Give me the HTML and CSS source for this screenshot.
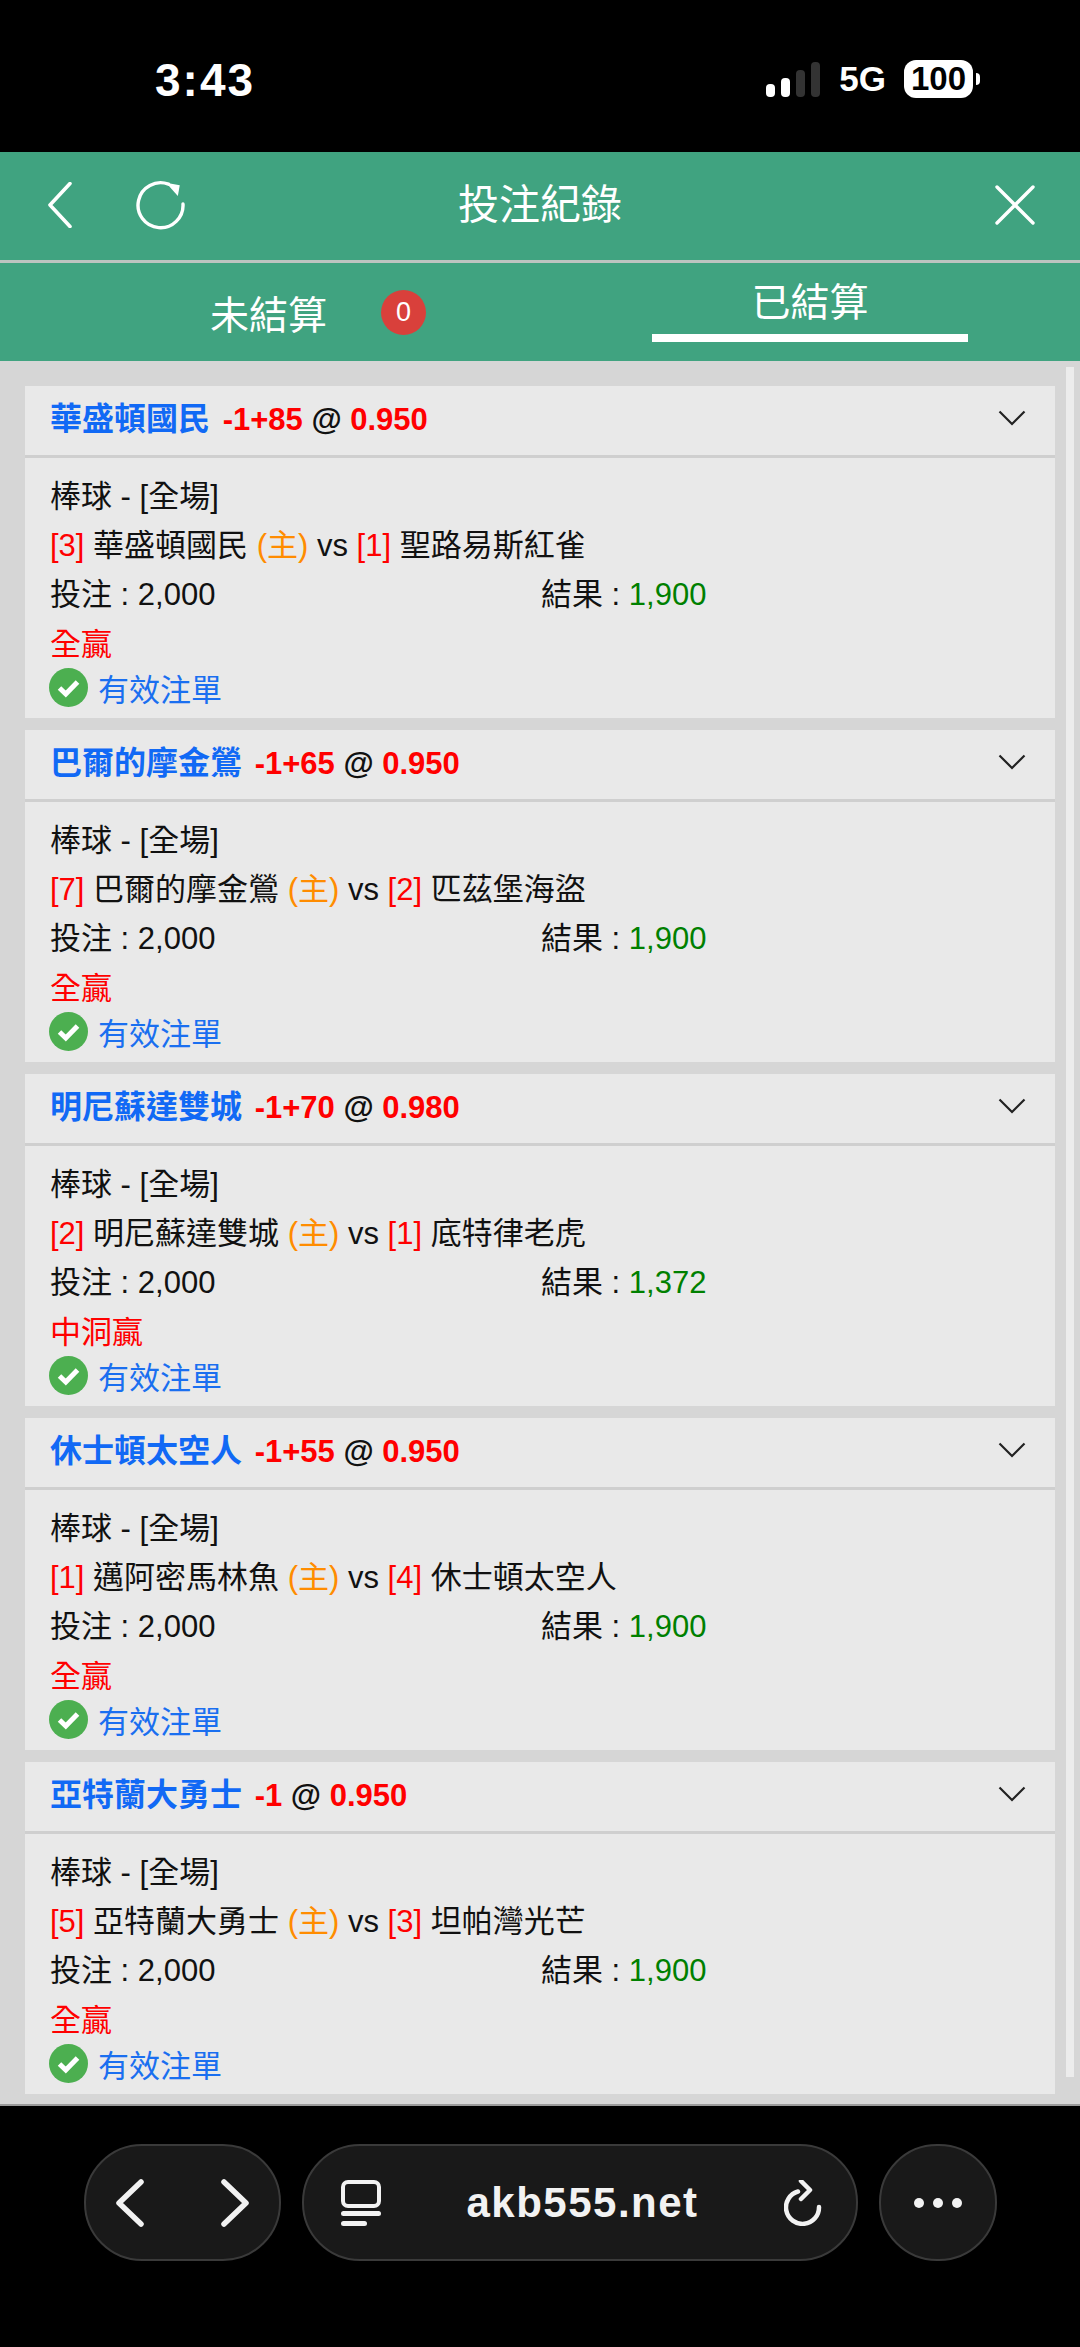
FILE: index.html
```html
<!DOCTYPE html>
<html lang="zh-Hant">
<head>
    <meta charset="utf-8">
    <title>投注紀錄</title>
    <link rel="stylesheet" href="styles.css">
</head>
<body>
    <div class="status">
        <span class="time">3:43</span>
        <div class="status-right">
            <div class="signal">
                <i class="bar b1"></i><i class="bar b2"></i><i class="bar b3 off"></i><i class="bar b4 off"></i>
            </div>
            <span class="net">5G</span>
            <span class="battery">100</span>
            <i class="nub"></i>
        </div>
    </div>

    <div class="header">
        <svg class="ic-back" width="24" height="46" viewBox="0 0 24 46"><path d="M22 1.500 L2 23 L22 44.500" fill="none" stroke="#fff" stroke-width="3.600" stroke-linecap="round" stroke-linejoin="round"/></svg>
        <svg class="ic-reload" width="50" height="50" viewBox="0 0 50 50"><path d="M32.500 4.200 A22.500 22.500 0 1 0 47 24" fill="none" stroke="#fff" stroke-width="3.400" stroke-linecap="round"/><path d="M29 4 L43 4 L43 15 Z" fill="#fff" transform="rotate(10 36 9)"/></svg>
        <span class="title">投注紀錄</span>
        <svg class="ic-close" width="40" height="40" viewBox="0 0 40 40"><path d="M2 2 L38 38 M38 2 L2 38" fill="none" stroke="#fff" stroke-width="3.400" stroke-linecap="round"/></svg>
    </div>

    <div class="tabs">
        <div class="tab tab-open">
            <span>未結算</span>
            <span class="badge">0</span>
        </div>
        <div class="tab tab-done">
            <span>已結算</span>
        </div>
    </div>

    <div class="content">
        <div class="list">
            <div class="card">
                <div class="card-head">
                    <div><span class="team">華盛頓國民</span> <span class="red">-1+85</span> @ <span class="red">0.950</span></div>
                    <svg class="ic-down" width="28" height="16" viewBox="0 0 28 16"><path d="M1.500 1.500 L14 14 L26.500 1.500" fill="none" stroke="#222" stroke-width="2.200"/></svg>
                </div>
                <div class="card-body">
                    <div class="row">棒球 - [全場]</div>
                    <div class="row"><span class="red">[3]</span> 華盛頓國民 <span class="orange">(主)</span> vs <span class="red">[1]</span> 聖路易斯紅雀</div>
                    <div class="row split"><span>投注 : 2,000</span><span>結果 : <span class="green">1,900</span></span></div>
                    <div class="row result red">全贏</div>
                    <div class="valid">
                        <svg width="39" height="39" viewBox="0 0 39 39"><circle cx="19.500" cy="19.500" r="19.500" fill="#4caf50"/><path d="M10.500 20 L16.800 26 L28.500 14" fill="none" stroke="#fff" stroke-width="5"/></svg>
                        <span>有效注單</span>
                    </div>
                </div>
            </div>

            <div class="card">
                <div class="card-head">
                    <div><span class="team">巴爾的摩金鶯</span> <span class="red">-1+65</span> @ <span class="red">0.950</span></div>
                    <svg class="ic-down" width="28" height="16" viewBox="0 0 28 16"><path d="M1.500 1.500 L14 14 L26.500 1.500" fill="none" stroke="#222" stroke-width="2.200"/></svg>
                </div>
                <div class="card-body">
                    <div class="row">棒球 - [全場]</div>
                    <div class="row"><span class="red">[7]</span> 巴爾的摩金鶯 <span class="orange">(主)</span> vs <span class="red">[2]</span> 匹茲堡海盜</div>
                    <div class="row split"><span>投注 : 2,000</span><span>結果 : <span class="green">1,900</span></span></div>
                    <div class="row result red">全贏</div>
                    <div class="valid">
                        <svg width="39" height="39" viewBox="0 0 39 39"><circle cx="19.500" cy="19.500" r="19.500" fill="#4caf50"/><path d="M10.500 20 L16.800 26 L28.500 14" fill="none" stroke="#fff" stroke-width="5"/></svg>
                        <span>有效注單</span>
                    </div>
                </div>
            </div>

            <div class="card">
                <div class="card-head">
                    <div><span class="team">明尼蘇達雙城</span> <span class="red">-1+70</span> @ <span class="red">0.980</span></div>
                    <svg class="ic-down" width="28" height="16" viewBox="0 0 28 16"><path d="M1.500 1.500 L14 14 L26.500 1.500" fill="none" stroke="#222" stroke-width="2.200"/></svg>
                </div>
                <div class="card-body">
                    <div class="row">棒球 - [全場]</div>
                    <div class="row"><span class="red">[2]</span> 明尼蘇達雙城 <span class="orange">(主)</span> vs <span class="red">[1]</span> 底特律老虎</div>
                    <div class="row split"><span>投注 : 2,000</span><span>結果 : <span class="green">1,372</span></span></div>
                    <div class="row result red">中洞贏</div>
                    <div class="valid">
                        <svg width="39" height="39" viewBox="0 0 39 39"><circle cx="19.500" cy="19.500" r="19.500" fill="#4caf50"/><path d="M10.500 20 L16.800 26 L28.500 14" fill="none" stroke="#fff" stroke-width="5"/></svg>
                        <span>有效注單</span>
                    </div>
                </div>
            </div>

            <div class="card">
                <div class="card-head">
                    <div><span class="team">休士頓太空人</span> <span class="red">-1+55</span> @ <span class="red">0.950</span></div>
                    <svg class="ic-down" width="28" height="16" viewBox="0 0 28 16"><path d="M1.500 1.500 L14 14 L26.500 1.500" fill="none" stroke="#222" stroke-width="2.200"/></svg>
                </div>
                <div class="card-body">
                    <div class="row">棒球 - [全場]</div>
                    <div class="row"><span class="red">[1]</span> 邁阿密馬林魚 <span class="orange">(主)</span> vs <span class="red">[4]</span> 休士頓太空人</div>
                    <div class="row split"><span>投注 : 2,000</span><span>結果 : <span class="green">1,900</span></span></div>
                    <div class="row result red">全贏</div>
                    <div class="valid">
                        <svg width="39" height="39" viewBox="0 0 39 39"><circle cx="19.500" cy="19.500" r="19.500" fill="#4caf50"/><path d="M10.500 20 L16.800 26 L28.500 14" fill="none" stroke="#fff" stroke-width="5"/></svg>
                        <span>有效注單</span>
                    </div>
                </div>
            </div>

            <div class="card">
                <div class="card-head">
                    <div><span class="team">亞特蘭大勇士</span> <span class="red">-1</span> @ <span class="red">0.950</span></div>
                    <svg class="ic-down" width="28" height="16" viewBox="0 0 28 16"><path d="M1.500 1.500 L14 14 L26.500 1.500" fill="none" stroke="#222" stroke-width="2.200"/></svg>
                </div>
                <div class="card-body">
                    <div class="row">棒球 - [全場]</div>
                    <div class="row"><span class="red">[5]</span> 亞特蘭大勇士 <span class="orange">(主)</span> vs <span class="red">[3]</span> 坦帕灣光芒</div>
                    <div class="row split"><span>投注 : 2,000</span><span>結果 : <span class="green">1,900</span></span></div>
                    <div class="row result red">全贏</div>
                    <div class="valid">
                        <svg width="39" height="39" viewBox="0 0 39 39"><circle cx="19.500" cy="19.500" r="19.500" fill="#4caf50"/><path d="M10.500 20 L16.800 26 L28.500 14" fill="none" stroke="#fff" stroke-width="5"/></svg>
                        <span>有效注單</span>
                    </div>
                </div>
            </div>
        </div>
        <div class="scrollbar"></div>
    </div>

    <div class="toolbar">
        <div class="pill pill-nav">
            <svg width="30" height="48" viewBox="0 0 30 48"><path d="M26 3 L4 24 L26 45" fill="none" stroke="#f2f2f2" stroke-width="5.500" stroke-linecap="round" stroke-linejoin="round"/></svg>
            <svg width="30" height="48" viewBox="0 0 30 48"><path d="M4 3 L26 24 L4 45" fill="none" stroke="#f2f2f2" stroke-width="5.500" stroke-linecap="round" stroke-linejoin="round"/></svg>
        </div>
        <div class="pill pill-url">
            <svg width="40" height="46" viewBox="0 0 40 46"><rect x="2" y="2" width="36" height="24" rx="5" fill="none" stroke="#f2f2f2" stroke-width="4"/><rect x="0" y="31" width="40" height="5" rx="2.500" fill="#f2f2f2"/><rect x="0" y="41" width="26" height="5" rx="2.500" fill="#f2f2f2"/></svg>
            <span class="url">akb555.net</span>
            <svg width="38" height="46" viewBox="0 0 38 46"><path d="M14 11.500 A16.500 16.500 0 1 0 35 27" fill="none" stroke="#f2f2f2" stroke-width="4.500" stroke-linecap="round"/><path d="M17 1 L26 10 L17 19" fill="none" stroke="#f2f2f2" stroke-width="4.500" stroke-linecap="round" stroke-linejoin="round"/></svg>
        </div>
        <div class="pill pill-more">
            <i class="dot"></i><i class="dot"></i><i class="dot"></i>
        </div>
    </div>
</body>
</html>
```

FILE: styles.css
```css
* {
    box-sizing: border-box;
}
body {
    margin: 0;
    width: 1080px;
    height: 2347px;
    background-color: #000;
    font-family: "Liberation Sans", "Noto Sans CJK TC", sans-serif;
    font-size: 31px;
    color: #111;
    overflow: hidden;
}

/* status bar */
.status {
    height: 152px;
    display: flex;
    justify-content: space-between;
    padding: 56px 100px 0 155px;
    color: #fff;
}
.time {
    font-size: 46px;
    font-weight: bold;
    line-height: 48px;
    letter-spacing: 2px;
}
.status-right {
    display: flex;
    align-items: flex-start;
    padding-top: 4px;
}
.signal {
    display: flex;
    align-items: flex-end;
    gap: 6px;
    height: 35px;
    margin-top: 2px;
}
.bar {
    width: 9px;
    border-radius: 4px;
    background-color: #fff;
}
.bar.off {
    background-color: #333;
}
.b1 { height: 13px; }
.b2 { height: 19px; }
.b3 { height: 27px; }
.b4 { height: 35px; }
.net {
    font-size: 35px;
    font-weight: bold;
    line-height: 38px;
    margin-left: 19px;
}
.battery {
    width: 69px;
    height: 38px;
    margin-left: 18px;
    border-radius: 12px;
    background-color: #fff;
    color: #000;
    font-size: 33px;
    font-weight: bold;
    line-height: 38px;
    text-align: center;
}
.nub {
    width: 4px;
    height: 12px;
    margin: 13px 0 0 3px;
    border-radius: 0 4px 4px 0;
    background-color: #fff;
}

/* green header */
.header {
    height: 111px;
    display: flex;
    align-items: center;
    padding: 0 45px 3px 48px;
    background-color: #40a380;
    border-bottom: 3px solid #bcc4c0;
    color: #fff;
    position: relative;
}
.ic-reload {
    margin-left: 64px;
}
.title {
    position: absolute;
    left: 0;
    right: 0;
    text-align: center;
    font-size: 41px;
    line-height: 50px;
}
.ic-close {
    margin-left: auto;
}

.tabs {
    height: 98px;
    display: grid;
    grid-template-columns: 540px 540px;
    background-color: #40a380;
    color: #fff;
    font-size: 39px;
}
.tab-open {
    display: flex;
    align-items: center;
    gap: 54px;
    padding-left: 210px;
    padding-top: 0;
}
.badge {
    width: 45px;
    height: 45px;
    border-radius: 50%;
    background-color: #d9403b;
    font-size: 27px;
    line-height: 45px;
    text-align: center;
}
.tab-done {
    width: 316px;
    height: 79px;
    margin-left: 112px;
    padding-top: 16px;
    border-bottom: 8px solid #fff;
    text-align: center;
    line-height: 48px;
}

/* bet list */
.content {
    height: 1745px;
    display: flex;
    background-color: #d6d6d6;
    border-bottom: 2px solid #9a9a9a;
}
.list {
    width: 1055px;
    padding: 25px 0 0 25px;
    display: flex;
    flex-direction: column;
    gap: 12px;
}
.card {
    height: 332px;
    background-color: #e9e9e9;
}
.card-head {
    height: 72px;
    display: flex;
    justify-content: space-between;
    padding: 13px 29px 0 25px;
    border-bottom: 3px solid #cfcfcf;
    font-size: 31px;
    font-weight: bold;
    line-height: 40px;
}
.ic-down {
    margin-top: 11px;
}
.team {
    color: #1169f5;
    font-size: 32px;
    margin-right: 4px;
}
.red {
    color: #ff0000;
}
.orange {
    color: #ff8c00;
}
.green {
    color: #008000;
}
.card-body {
    padding: 14px 0 0 25px;
}
.row {
    height: 49px;
    line-height: 49px;
    white-space: nowrap;
}
.split {
    display: grid;
    grid-template-columns: 491px 1fr;
}
.result {
    height: 36px;
    line-height: 36px;
    margin-top: 8px;
}
.valid {
    display: flex;
    align-items: center;
    gap: 10px;
    margin: 2px 0 0 -1px;
    color: #1a6ff0;
}
.scrollbar {
    width: 8px;
    height: 1710px;
    margin: 6px 0 0 11px;
    background-color: #ececec;
}

/* browser toolbar */
.toolbar {
    display: flex;
    gap: 21px;
    padding: 38px 0 0 84px;
}
.pill {
    height: 117px;
    border-radius: 58px;
    border: 2px solid #3a3a3a;
    background-color: #191919;
    display: flex;
    align-items: center;
}
.pill-nav {
    width: 197px;
    justify-content: space-between;
    padding: 0 29px 0 29px;
}
.pill-url {
    width: 556px;
    justify-content: space-between;
    padding: 0 34px 0 37px;
}
.url {
    color: #f2f2f2;
    font-size: 42px;
    font-weight: bold;
    letter-spacing: 1.500px;
}
.pill-more {
    width: 118px;
    justify-content: center;
    gap: 9px;
}
.dot {
    width: 10px;
    height: 10px;
    border-radius: 50%;
    background-color: #f2f2f2;
}
```
